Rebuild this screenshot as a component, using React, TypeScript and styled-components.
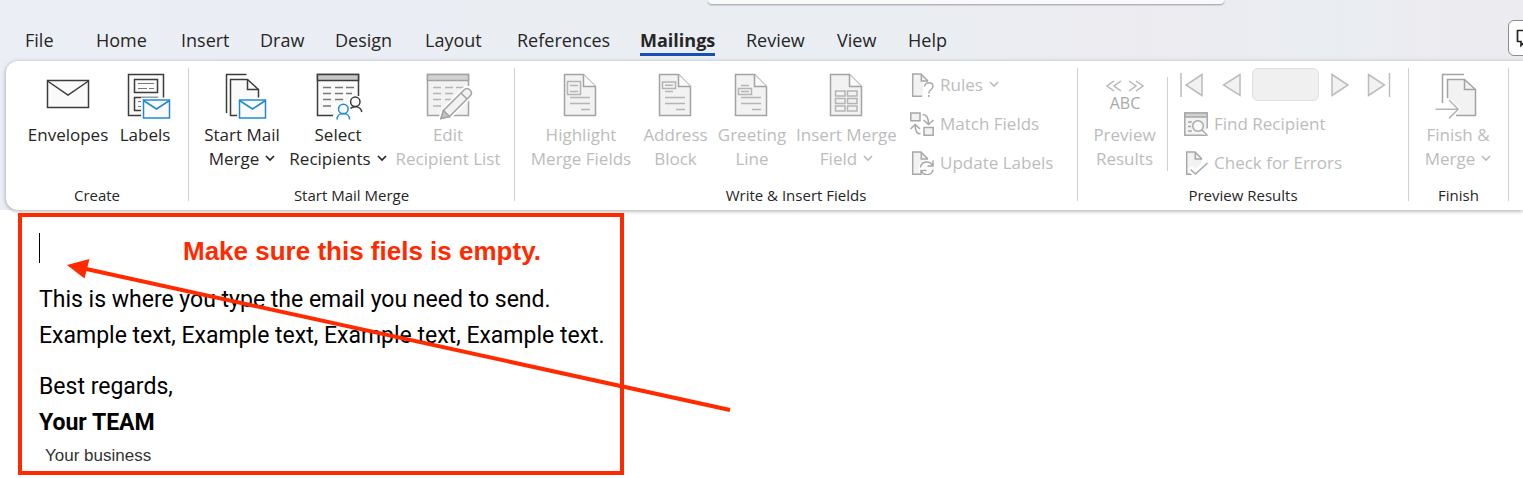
import React from "react";
import styled, { createGlobalStyle } from "styled-components";

const uiFont = `"Open Sans", "Noto Sans", sans-serif`;
const ink = "#262626";
const muted = "#bcbcbc";
const line = "#d0d0d0";
const blue = "#1f8ad2";
const red = "#ff2a00";

const GlobalStyle = createGlobalStyle`
  * { box-sizing: border-box; }
  body { margin: 0; background: #fff; overflow: hidden; }
  button { font: inherit; color: inherit; border: 0; padding: 0; background: none; }
  svg { display: block; flex: none; }
`;

const Page = styled.div`
  font-family: ${uiFont};
  color: ${ink};
  overflow: hidden;
`;

const Header = styled.header`
  background: linear-gradient(90deg, #ebeef4 0%, #eaeef3 60%, #ecebf0 75%, #e9edf2 88%, #ecebf0 95%);
`;

const SearchEdge = styled.div`
  width: 516px;
  height: 4px;
  margin-left: 708px;
  background: #f9f9f9;
  border-radius: 0 0 6px 6px;
  box-shadow: 0 1px 2px rgba(0, 0, 0, 0.35);
`;

const TabRow = styled.nav`
  display: flex;
  align-items: flex-start;
  padding: 16px 0 5px 10px;
`;

const Tab = styled.button<{ $width: number; $active?: boolean }>`
  flex: none;
  width: ${(p) => p.$width}px;
  height: 36px;
  padding: 4px 0 0 15px;
  text-align: left;
  white-space: nowrap;
  font-size: 18px;
  line-height: 32px;
  font-weight: ${(p) => (p.$active ? 700 : 400)};

  span {
    display: inline-block;
    height: 32px;
    border-bottom: 3px solid ${(p) => (p.$active ? "#1650b0" : "transparent")};
  }
`;

const CommentButton = styled.button`
  flex: none;
  width: 40px;
  height: 36px;
  margin: 0 -25px 0 auto;
  padding-left: 7px;
  border: 1px solid #8c8c8c;
  border-radius: 6px;
  background: #fdfdfd;
`;

const Ribbon = styled.div`
  display: flex;
  margin-left: 6px;
  padding: 7px 0 5px;
  background: #fff;
  border-radius: 12px 0 0 12px;
  box-shadow: 0 1px 4px rgba(0, 0, 0, 0.35);
`;

const Group = styled.section<{ $width: number }>`
  flex: none;
  width: ${(p) => p.$width}px;
`;

const GroupBody = styled.div<{ $inset: number; $gap: number }>`
  display: flex;
  align-items: flex-start;
  height: 118px;
  padding-left: ${(p) => p.$inset}px;
  gap: ${(p) => p.$gap}px;
`;

const GroupTitle = styled.h2`
  margin: 0;
  text-align: center;
  font-size: 15px;
  line-height: 19px;
  font-weight: 400;
`;

const GroupDivider = styled.div`
  flex: none;
  width: 1px;
  margin-bottom: 4px;
  background: ${line};
`;

const InnerDivider = styled.div`
  width: 1px;
  height: 94px;
  margin-top: 9px;
  background: ${line};
`;

const BigButton = styled.button<{ $width: number }>`
  flex: none;
  display: flex;
  flex-direction: column;
  align-items: center;
  width: ${(p) => p.$width}px;
  padding-top: 4px;
  font-size: 17px;
  line-height: 24px;
  white-space: nowrap;

  &:disabled {
    color: ${muted};
  }
`;

const Line = styled.span`
  display: flex;
  align-items: center;
  gap: 6px;
`;

const SmallColumn = styled.div`
  display: flex;
  flex-direction: column;
  gap: 15px;
  padding: 5px 0 0 2px;
`;

const SmallButton = styled.button`
  display: flex;
  align-items: center;
  gap: 6px;
  height: 24px;
  font-size: 17px;
  line-height: 24px;
  white-space: nowrap;

  &:disabled {
    color: ${muted};
  }
`;

const RecordTools = styled.div`
  display: flex;
  flex-direction: column;
  gap: 15px;
`;

const RecordNav = styled.div`
  display: flex;
  align-items: center;
  gap: 8px;
  height: 29px;
  padding-top: 4px;
`;

const NavGap = styled.div`
  display: flex;
  gap: 16px;
`;

const RecordInput = styled.input`
  width: 67px;
  height: 33px;
  border: 1px solid #dedede;
  border-radius: 6px;
  background: #f0f0f0;
`;

const RecordRows = styled.div`
  display: flex;
  flex-direction: column;
  gap: 15px;
  padding-left: 4px;
`;

const Document = styled.main`
  position: relative;
  padding: 3px 0 0 18px;
`;

const Frame = styled.article`
  width: 606px;
  padding: 16px 17px 0;
  border: 4px solid ${red};
  color: #000;
  font-family: Roboto, "Noto Sans", sans-serif;
  font-size: 23px;
  line-height: 36px;
`;

const FirstLine = styled.div`
  display: flex;
  gap: 143px;
  height: 34px;
`;

const Caret = styled.span`
  width: 1px;
  height: 30px;
  background: #000;
`;

const Callout = styled.strong`
  color: ${red};
  font-family: "Liberation Sans", Arial, sans-serif;
  font-size: 26px;
  white-space: nowrap;
`;

const Paragraph = styled.p`
  margin: 15px 0 0;
  white-space: nowrap;
`;

const Business = styled.p`
  margin: 0;
  padding-left: 6px;
  color: #333;
  font-family: "Liberation Sans", Arial, sans-serif;
  font-size: 17px;
  line-height: 30px;
`;

const ArrowLayer = styled.svg`
  position: absolute;
  top: 0;
  left: 0;
  pointer-events: none;
`;

const Chevron = () => (
  <svg width="10" height="8" viewBox="0 0 10 8" fill="none" stroke="currentColor" strokeWidth="1.7">
    <path d="M1 1 5 5 9 1" />
  </svg>
);

const BigIcon = ({ children, dim }: { children: React.ReactNode; dim?: boolean }) => (
  <svg width="60" height="51" viewBox="0 0 60 51" fill="#fafafa" stroke={dim ? "#a3a3a3" : "#3c3c3c"} strokeWidth="1.5" aria-hidden="true">
    {children}
  </svg>
);

const SmallIcon = ({ children }: { children: React.ReactNode }) => (
  <svg width="24" height="24" viewBox="0 0 24 24" fill="none" stroke="#a8a8a8" strokeWidth="1.5" aria-hidden="true">
    {children}
  </svg>
);

const BlueEnvelope = ({ x }: { x: number }) => (
  <g transform={`translate(${x} 28)`}>
    <path d="M-2.5-2.5H28.5V20.5H-2.5Z" fill="#fff" stroke="none" />
    <path d="M0 0H26V18H0Z" stroke={blue} />
    <path d="M0 .5 13 9 26 .5" fill="none" stroke={blue} />
  </g>
);

const EnvelopeIcon = () => (
  <BigIcon>
    <path d="M9.5 8.5H50.5V35.5H9.5Z" />
    <path d="M9.5 9 30 23 50.5 9" fill="none" />
  </BigIcon>
);

const LabelsIcon = () => (
  <BigIcon>
    <path d="M13.5 2.5H48.5V43.5H13.5Z" />
    <path d="M19.5 7.5H42.5V20.5H19.5ZM19.5 25.5H42.5V38.5H19.5Z" />
    <path d="M23 11.5H39M23 16.5H32M34 16.5H39M23 29.5H27M23 34.5H27" stroke="#777" strokeWidth="1" />
    <BlueEnvelope x={28.5} />
  </BigIcon>
);

const MergeIcon = () => (
  <BigIcon>
    <path d="M14.5 41V2.5H34.5" fill="none" />
    <path d="M46.5 28V17.5L35.5 7.5H18.5V43.5H28" />
    <path d="M35.5 7.5V17.5H46.5" fill="none" />
    <BlueEnvelope x={27.5} />
  </BigIcon>
);

const RecipientsIcon = () => (
  <BigIcon>
    <path d="M9.5 2.5H50.5V43.5H9.5Z" />
    <path d="M9.5 2.5H50.5V8.5H9.5Z" fill="#c8c8c8" />
    <path d="M15 15.5H23M27 15.5H35M38 15.5H46M15 21.5H23M27 21.5H35M38 21.5H44M15 27.5H23M27 27.5H35M15 34H23" stroke="#777" />
    <path d="M25 48V43L29 41V34L34 30L40 30L42 24H54V48Z" fill="#fff" stroke="none" />
    <circle cx="47.3" cy="29.8" r="4.7" />
    <path d="M42.5 36.5C45 34 52.5 33.5 53.8 40" fill="none" />
    <circle cx="35.3" cy="37" r="4.8" stroke={blue} />
    <path d="M29 47.5C29 39.5 41.6 39.5 41.6 47.5" fill="none" stroke={blue} />
  </BigIcon>
);

const EditListIcon = () => (
  <BigIcon dim>
    <path d="M9.5 2.5H50.5V43.5H9.5Z" fill="#f2f2f2" />
    <path d="M9.5 2.5H50.5V8.5H9.5Z" fill="#d2d2d2" />
    <path d="M15 15.5H23M27 15.5H35M38 15.5H46M15 21.5H23M27 21.5H35M15 27.5H23M27 27.5H33M15 34H23" stroke="#b5b5b5" />
    <path d="M23 46.5 25.5 38.5 46 18Q49 15 52 18 55 21 52 24L31.5 44.5Z" fill="#fff" stroke="#fff" strokeWidth="5" />
    <path d="M23 46.5 25.5 38.5 46 18Q49 15 52 18 55 21 52 24L31.5 44.5Z" fill="#f2f2f2" />
    <path d="M23 46.5 25.5 38.5 31.5 44.5Z" fill="#c4c4c4" />
    <path d="M43 21 49 27" />
  </BigIcon>
);

const PageIcon = ({ children, lines = true }: { children: React.ReactNode; lines?: boolean }) => (
  <BigIcon dim>
    <path d="M13.5 2.5H32.5L44.5 14.5V43.5H13.5Z" fill="#f2f2f2" />
    <path d="M32.5 2.5V14.5H44.5" fill="#fafafa" />
    {lines && <path d="M19 25.5H39M19 31.5H39M30 37.5H39" stroke="#b5b5b5" />}
    <g stroke="#b5b5b5" fill="none">{children}</g>
  </BigIcon>
);

const PreviewIcon = () => (
  <BigIcon dim>
    <path d="M19 9 12 14 19 19M26 9 19 14 26 19M34 9 41 14 34 19M41 9 48 14 41 19" fill="none" stroke="#b5b5b5" />
    <text x="30" y="37" textAnchor="middle" fontSize="16" fill="#a8a8a8" stroke="none">ABC</text>
  </BigIcon>
);

const FinishIcon = () => (
  <BigIcon dim>
    <path d="M14.5 31V2.5H36" fill="none" />
    <path d="M19.5 26V7.5H36.5L47.5 17.5V43.5H28L30.5 37Z" fill="#f2f2f2" stroke="none" />
    <path d="M19.5 26V7.5H36.5L47.5 17.5V43.5H28M36.5 7.5V17.5H47.5" fill="none" />
    <path d="M7.5 37.2H30M21 28 30.2 37.2 21 46.4" fill="none" stroke="#fff" strokeWidth="4" />
    <path d="M7.5 37.2H30M21 28 30.2 37.2 21 46.4" fill="none" stroke="#b5b5b5" />
  </BigIcon>
);

const SmallPage = () => (
  <>
    <path d="M2.7 1H11L18 8V23.3H2.7Z" fill="#f2f2f2" stroke="none" />
    <path d="M12 23.3H2.7V1H11L18 8M11.3 1V8H18" />
  </>
);

const RulesIcon = () => (
  <SmallIcon>
    <SmallPage />
    <path d="M13 9H24V24H13Z" fill="#fff" stroke="none" />
    <path d="M14.5 13.5C14.5 8.5 23 8.8 23 13.3 23 16.5 18.8 16.5 18.8 20.5M18.8 22V24" />
  </SmallIcon>
);

const MatchIcon = () => (
  <SmallIcon>
    <path d="M.8 1H10V8.8H.8ZM14 15.5H23.2V23.3H14Z" fill="#f2f2f2" />
    <path d="M12.5 2.5Q18.5 2.5 18.5 12M13.5 8 18.5 12.5 23.5 8M10.5 22Q5.2 22 5.2 13M.5 17 5.2 12.5 10 17" />
  </SmallIcon>
);

const UpdateIcon = () => (
  <SmallIcon>
    <SmallPage />
    <circle cx="17" cy="17.5" r="8.5" fill="#fff" stroke="none" />
    <path d="M10.5 16.5C11.5 9.8 20 9.5 22.5 14.5M23 9.5V15H17.5M23 18.5C22 25 14 25 11.5 20.5M11 24.5V19.5H16.5" />
  </SmallIcon>
);

const FindIcon = () => (
  <SmallIcon>
    <path d="M.8 1H23.2V23.2H.8Z" fill="#f2f2f2" />
    <path d="M.8 1H23.2V5H.8Z" fill="#d2d2d2" />
    <path d="M4 10H8M4 14.5H7M4 19H8" />
    <path d="M17 21 24 24V16Z" fill="#fff" stroke="none" />
    <circle cx="14" cy="14" r="5.3" fill="#fafafa" />
    <path d="M18 18 23.5 23.5" />
  </SmallIcon>
);

const CheckIcon = () => (
  <SmallIcon>
    <SmallPage />
    <path d="M4 18 8 15 12 18 20 9.5 24 12V24H8Z" fill="#fff" stroke="none" />
    <path d="M6.5 18.5 11.5 23 23.5 12" />
  </SmallIcon>
);

const triangleLeft = "M20 1.5 3.5 12 20 22.5Z";
const triangleRight = "M5 1.5 21 12 5 22.5Z";

const NavButton = ({ label, path, bar }: { label: string; path: string; bar?: number }) => (
  <button aria-label={label} disabled>
    <SmallIcon>
      <path d={path} fill="#f2f2f2" stroke="#bcbcbc" />
      {bar !== undefined && <path d={`M${bar} 0V24`} stroke="#bcbcbc" />}
    </SmallIcon>
  </button>
);

type BigProps = { icon: React.ReactNode; lines: string[]; width: number; menu?: boolean; disabled?: boolean };

const Big = ({ icon, lines, width, menu, disabled }: BigProps) => (
  <BigButton $width={width} disabled={disabled}>
    {icon}
    {lines.map((text, i) => (
      <Line key={text}>
        {text}
        {menu && i === lines.length - 1 && <Chevron />}
      </Line>
    ))}
  </BigButton>
);

const tabs: [string, number][] = [
  ["File", 71], ["Home", 85], ["Insert", 79], ["Draw", 75], ["Design", 90], ["Layout", 92],
  ["References", 123], ["Mailings", 106], ["Review", 91], ["View", 71], ["Help", 71],
];

export default function App() {
  return (
    <Page>
      <GlobalStyle />
      <Header>
        <SearchEdge />
        <TabRow aria-label="Ribbon tabs">
          {tabs.map(([name, width]) => (
            <Tab key={name} $width={width} $active={name === "Mailings"}>
              <span>{name}</span>
            </Tab>
          ))}
          <CommentButton aria-label="Comments">
            <svg width="22" height="20" viewBox="0 0 22 20" fill="none" stroke="#262626" strokeWidth="1.7">
              <path d="M1.5 2.5H20.5V13.5H9L5 17.5V13.5H1.5Z" />
            </svg>
          </CommentButton>
        </TabRow>
        <Ribbon>
          <Group $width={182}>
            <GroupBody $inset={22} $gap={12}>
              <Big icon={<EnvelopeIcon />} lines={["Envelopes"]} width={80} />
              <Big icon={<LabelsIcon />} lines={["Labels"]} width={50} />
            </GroupBody>
            <GroupTitle>Create</GroupTitle>
          </Group>
          <GroupDivider />
          <Group $width={325}>
            <GroupBody $inset={15} $gap={11}>
              <Big icon={<MergeIcon />} lines={["Start Mail", "Merge"]} width={76} menu />
              <Big icon={<RecipientsIcon />} lines={["Select", "Recipients"]} width={94} menu />
              <Big icon={<EditListIcon />} lines={["Edit", "Recipient List"]} width={104} disabled />
            </GroupBody>
            <GroupTitle>Start Mail Merge</GroupTitle>
          </Group>
          <GroupDivider />
          <Group $width={562}>
            <GroupBody $inset={15} $gap={11}>
              <Big
                icon={<PageIcon><path d="M16.5 9.5H29.5V22.5H16.5ZM19 13.5H27M19 19.5H27" /></PageIcon>}
                lines={["Highlight", "Merge Fields"]}
                width={102}
                disabled
              />
              <Big
                icon={<PageIcon><path d="M16.5 10H29.5V16.5H16.5ZM19 13.3H27M19 19.5H27" /></PageIcon>}
                lines={["Address", "Block"]}
                width={65}
                disabled
              />
              <Big
                icon={<PageIcon><path d="M19 13.5H27M16.5 16.5H29.5V22.5H16.5ZM19 19.5H27" /></PageIcon>}
                lines={["Greeting", "Line"]}
                width={66}
                disabled
              />
              <Big
                icon={
                  <PageIcon lines={false}>
                    <path d="M18.5 19H28V24H18.5ZM30.5 19H40V24H30.5ZM18.5 26.5H28V31.5H18.5ZM30.5 26.5H40V31.5H30.5ZM18.5 34H28V39H18.5ZM30.5 34H40V39H30.5Z" />
                  </PageIcon>
                }
                lines={["Insert Merge", "Field"]}
                width={101}
                menu
                disabled
              />
              <SmallColumn>
                <SmallButton disabled><RulesIcon />Rules<Chevron /></SmallButton>
                <SmallButton disabled><MatchIcon />Match Fields</SmallButton>
                <SmallButton disabled><UpdateIcon />Update Labels</SmallButton>
              </SmallColumn>
            </GroupBody>
            <GroupTitle>Write &amp; Insert Fields</GroupTitle>
          </Group>
          <GroupDivider />
          <Group $width={330}>
            <GroupBody $inset={16} $gap={12}>
              <Big icon={<PreviewIcon />} lines={["Preview", "Results"]} width={61} disabled />
              <InnerDivider />
              <RecordTools>
                <RecordNav>
                  <NavGap>
                    <NavButton label="First record" path="M22 1.5 6 12 22 22.5Z" bar={1} />
                    <NavButton label="Previous record" path={triangleLeft} />
                  </NavGap>
                  <RecordInput aria-label="Record number" disabled />
                  <NavGap>
                    <NavButton label="Next record" path={triangleRight} />
                    <NavButton label="Last record" path="M1.5 1.5 17.5 12 1.5 22.5Z" bar={22.5} />
                  </NavGap>
                </RecordNav>
                <RecordRows>
                  <SmallButton disabled><FindIcon />Find Recipient</SmallButton>
                  <SmallButton disabled><CheckIcon />Check for Errors</SmallButton>
                </RecordRows>
              </RecordTools>
            </GroupBody>
            <GroupTitle>Preview Results</GroupTitle>
          </Group>
          <GroupDivider />
          <Group $width={99}>
            <GroupBody $inset={16} $gap={0}>
              <Big icon={<FinishIcon />} lines={["Finish &", "Merge"]} width={66} menu disabled />
            </GroupBody>
            <GroupTitle>Finish</GroupTitle>
          </Group>
          <GroupDivider />
        </Ribbon>
      </Header>
      <Document>
        <Frame>
          <FirstLine>
            <Caret />
            <Callout>Make sure this fiels is empty.</Callout>
          </FirstLine>
          <Paragraph>
            This is where you type the email you need to send.
            <br />
            Example text, Example text, Example text, Example text.
          </Paragraph>
          <Paragraph>
            Best regards,
            <br />
            <b>Your TEAM</b>
          </Paragraph>
          <Business>Your business</Business>
        </Frame>
        <ArrowLayer width="740" height="210" viewBox="0 0 740 210" aria-hidden="true">
          <path d="M84 58.5 730 200" stroke={red} strokeWidth="4" />
          <path d="M67 55 89.5 49 84.5 68.5Z" fill={red} />
        </ArrowLayer>
      </Document>
    </Page>
  );
}
